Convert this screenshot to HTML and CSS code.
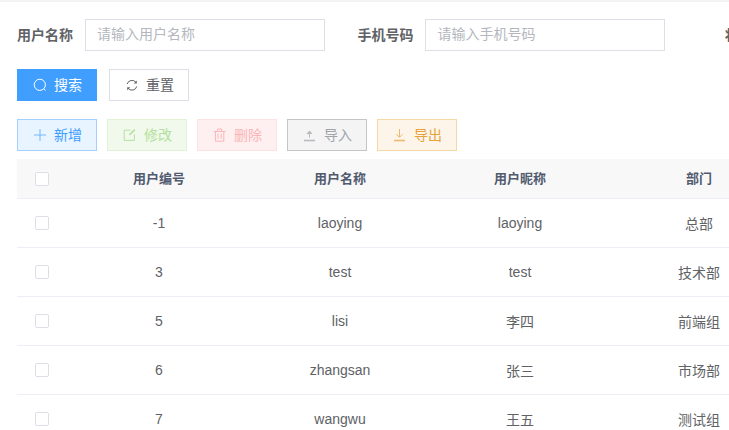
FILE: index.html
```html
<!DOCTYPE html>
<html lang="zh">
<head>
<meta charset="utf-8">
<title>用户管理</title>
<link rel="stylesheet" href="styles.css">
</head>
<body>
<div class="topline"></div>
<main class="page">
  <form class="query">
    <div class="fields">
      <label class="field"><span class="field-label">用户名称</span><input class="input" placeholder="请输入用户名称"></label>
      <label class="field"><span class="field-label">手机号码</span><input class="input" placeholder="请输入手机号码"></label>
      <span class="field field-cut"><span class="field-label">状态</span></span>
    </div>
    <div class="query-actions">
      <button type="button" class="btn btn-primary">
        <svg class="icon" viewBox="0 0 14 14"><circle cx="6.8" cy="6.8" r="5.6"/><path d="M10.9 10.9l1.6 1.6"/></svg><span class="btn-text">搜索</span></button>
      <button type="button" class="btn btn-plain">
        <svg class="icon" viewBox="0 0 14 14"><path d="M2.2 6A5 5 0 0 1 11 4.4M11.8 8.4A5 5 0 0 1 3 10.2"/><path class="solid" d="M11.8 2.4v3h-3zM2.2 12.2v-3h3z"/></svg><span class="btn-text">重置</span></button>
    </div>
  </form>
  <div class="toolbar">
    <button type="button" class="btn btn-add">
      <svg class="icon icon-soft" viewBox="0 0 14 14"><path d="M7 1v12M1 7h12"/></svg><span class="btn-text">新增</span></button>
    <button type="button" class="btn btn-edit">
      <svg class="icon" viewBox="0 0 14 14"><path d="M7.5 2.2H1.2v10.2h10.2V6.4"/><path class="thick" d="M11.8 1.6L6.4 7"/></svg><span class="btn-text">修改</span></button>
    <button type="button" class="btn btn-del">
      <svg class="icon" viewBox="0 0 14 14"><path d="M.8 3.5h11.6M2.4 3.5v9.7h8.4V3.5M4.6 3.5V1h4v2.5M5 5.8v4.8M8.2 5.8v4.8"/></svg><span class="btn-text">删除</span></button>
    <button type="button" class="btn btn-imp">
      <svg class="icon icon-soft" viewBox="0 0 14 14"><path class="thick" d="M1 12.5h11"/><path d="M6.5 9.5V3"/><path class="solid" d="M3.4 6L6.5 2.6 9.6 6z"/></svg><span class="btn-text">导入</span></button>
    <button type="button" class="btn btn-exp">
      <svg class="icon icon-soft" viewBox="0 0 14 14"><path class="thick" d="M1 12.5h11"/><path d="M6.5 1v8M3.4 6.2L6.5 9.3l3.1-3.1"/></svg><span class="btn-text">导出</span></button>
  </div>
  <table class="table">
    <thead>
      <tr><th class="c-check"><span class="check"></span></th><th class="c-id">用户编号</th><th class="c-name">用户名称</th><th class="c-nick">用户昵称</th><th class="c-dept">部门</th></tr>
    </thead>
    <tbody>
      <tr><td><span class="check"></span></td><td>-1</td><td>laoying</td><td>laoying</td><td>总部</td></tr>
      <tr><td><span class="check"></span></td><td>3</td><td>test</td><td>test</td><td>技术部</td></tr>
      <tr><td><span class="check"></span></td><td>5</td><td>lisi</td><td>李四</td><td>前端组</td></tr>
      <tr><td><span class="check"></span></td><td>6</td><td>zhangsan</td><td>张三</td><td>市场部</td></tr>
      <tr><td><span class="check"></span></td><td>7</td><td>wangwu</td><td>王五</td><td>测试组</td></tr>
    </tbody>
  </table>
</main>
</body>
</html>
```
FILE: styles.css
```css
* { box-sizing: border-box; }
html, body { margin: 0; height: 430px; overflow: hidden; background: #fff; }
body { font-family: "Liberation Sans", "Noto Sans CJK SC", sans-serif; font-size: 14px; color: #606266; }
.topline { height: 2px; background: #f3f3f4; }
.page { padding: 17px 0 0 17px; width: 800px; }
.fields { display: flex; height: 32px; }
.field { display: flex; align-items: center; margin-right: 32.4px; }
.field-label { width: 68px; margin-bottom: 2px; font-weight: 700; color: #606266; }
.input { width: 240px; height: 32px; border: 1px solid #dcdfe6; padding: 0 11px 2px; font: inherit; color: #606266; outline: none; border-radius: 0; background: #fff; }
.input::placeholder { color: #b4b7be; opacity: 1; }
.field-cut { margin-left: 27px; }
.query-actions { display: flex; gap: 12px; margin-top: 18px; }
.toolbar { display: flex; gap: 10px; margin-top: 18px; }
.btn { display: flex; align-items: center; justify-content: center; width: 80px; height: 32px; padding: 0 0 0 1px; border: 1px solid; border-radius: 0; font: inherit; background: #fff; }
.btn-text { margin-bottom: 2px; }
.icon { width: 14px; height: 14px; margin-right: 7px; fill: none; stroke: currentColor; stroke-width: 1; flex: none; }
.icon-soft { opacity: .7; }
.icon .thick { stroke-width: 1.6; }
.icon .solid { fill: currentColor; stroke: none; }
.btn-primary { background: #409eff; border-color: #409eff; color: #fff; }
.btn-plain { border-color: #dcdfe6; color: #606266; }
.btn-add { background: #e8f4ff; border-color: #a3d0ff; color: #409eff; }
.btn-edit { background: #f1f8ec; border-color: #e1f2d7; color: #b3e19d; }
.btn-del { background: #feeff0; border-color: #fde2e2; color: #fab6b6; }
.btn-imp { background: #f4f4f5; border-color: #c4c5c7; color: #a0a3a8; }
.btn-exp { background: #fdf5e9; border-color: #f5d9a3; color: #e6a23c; }
.table { width: 772px; border-collapse: separate; border-spacing: 0; table-layout: fixed; margin-top: 8px; }
.table th { height: 40px; background: #f8f8f9; font-size: 13px; font-weight: 700; color: #515a6e; border-bottom: 1px solid #ebeef5; padding: 0 0 2px; text-align: center; }
.table td { height: 49px; text-align: center; border-bottom: 1px solid #ebeef5; padding: 0 0 1px; }
.c-check { width: 52px; }
.c-id { width: 180px; }
.c-name { width: 182px; }
.c-nick { width: 178px; }
.c-dept { width: 180px; }
.table th:first-child, .table td:first-child { text-align: left; padding: 0 0 0 18px; }
.check { display: block; width: 14px; height: 14px; background: #fff; border: 1px solid #dcdfe6; border-radius: 2px; }
```
